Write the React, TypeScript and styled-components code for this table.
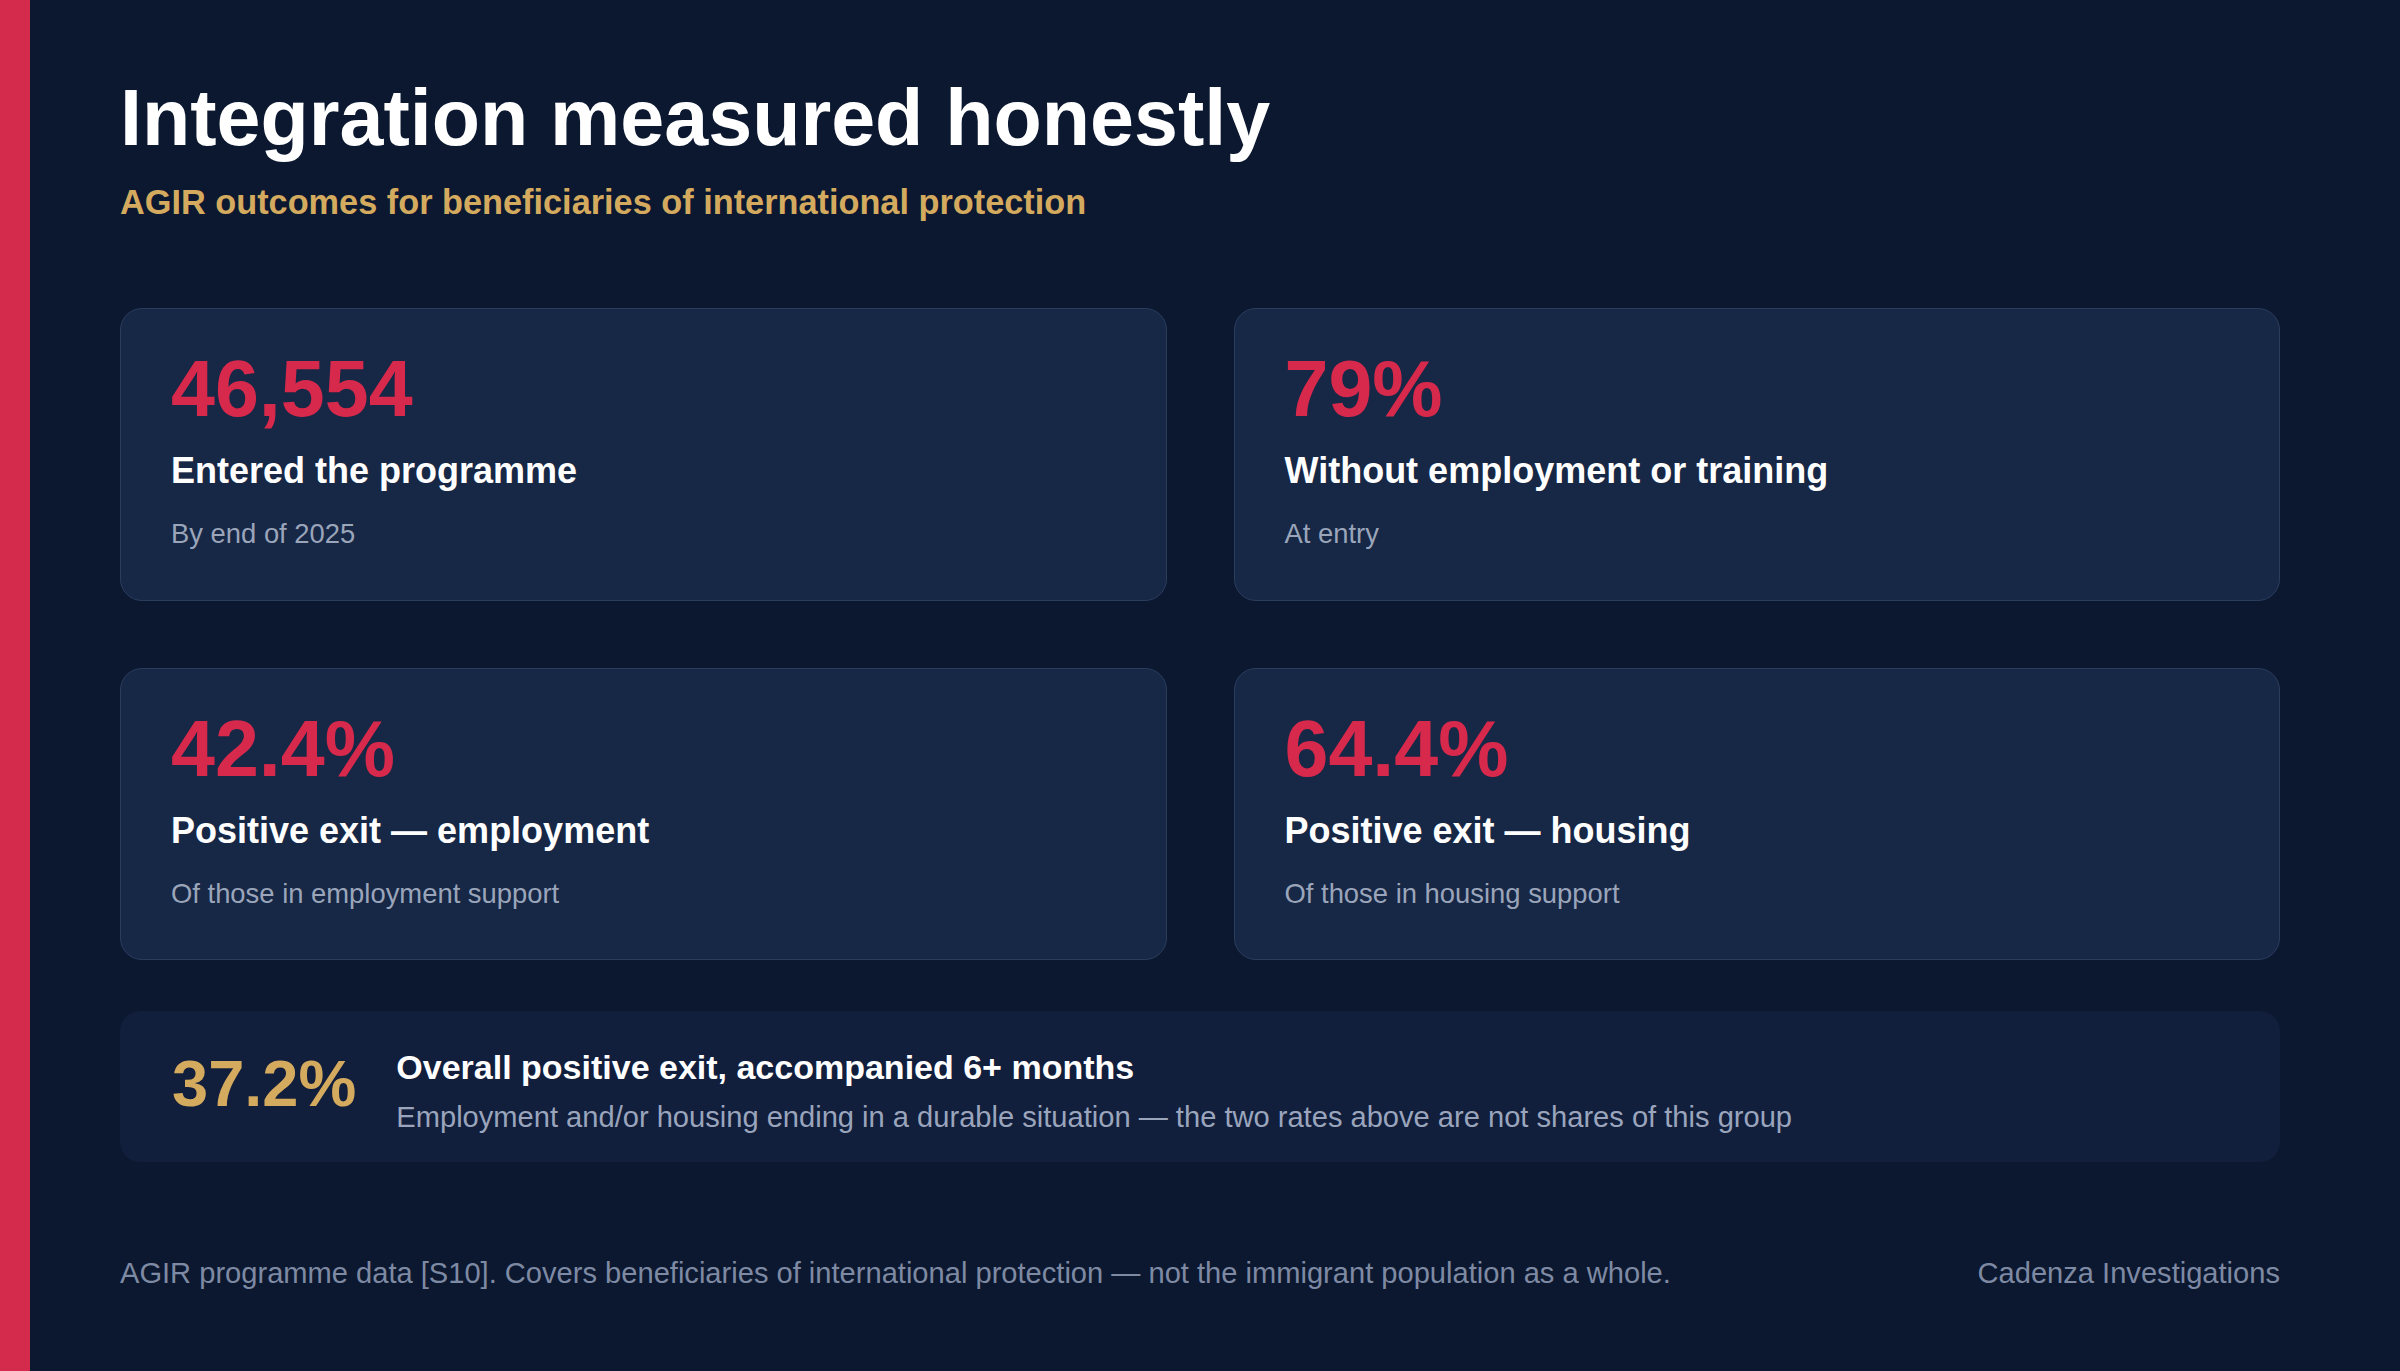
import React, { ReactElement } from "react"
import styled, { createGlobalStyle } from "styled-components"

const GlobalStyle = createGlobalStyle`
  html, body {
    margin: 0;
    padding: 0;
    background: #0c1830;
  }
  * {
    box-sizing: border-box;
  }
`

// Slide = accent bar + content column
const Slide = styled.div`
  display: flex;
  width: 2400px;
  height: 1371px;
  overflow: hidden;
  background: #0c1830;
  font-family: "Liberation Sans", Arial, sans-serif;
`

const AccentBar = styled.div`
  flex: 0 0 30px;
  background: #d42a4c;
`

const Content = styled.main`
  flex: 1;
  display: flex;
  flex-direction: column;
  padding: 78px 120px 0 90px;
`

const Title = styled.h1`
  margin: 0;
  font-size: 79px;
  line-height: 1;
  font-weight: 700;
  color: #ffffff;
`

const Subtitle = styled.p`
  margin: 28px 0 0;
  font-size: 34.3px;
  line-height: 1;
  font-weight: 700;
  color: #d4aa5f;
`

const StatGrid = styled.section`
  margin-top: 89px;
  display: grid;
  grid-template-columns: 1fr 1fr;
  gap: 67px;
`

const StatCard = styled.div`
  display: flex;
  flex-direction: column;
  padding: 40px 50px 52px;
  background: #172746;
  border: 1px solid #2b3d5e;
  border-radius: 22px;
`

const StatValue = styled.div`
  font-size: 79px;
  line-height: 1;
  font-weight: 700;
  color: #d7294b;
`

const StatLabel = styled.div`
  margin-top: 25px;
  font-size: 36px;
  line-height: 1;
  font-weight: 700;
  color: #ffffff;
`

const StatNote = styled.div`
  margin-top: 31px;
  font-size: 27.4px;
  line-height: 1;
  color: #9aa5ba;
`

// Summary = gold figure + two lines of text
const Summary = styled.div`
  margin-top: 51px;
  display: flex;
  align-items: flex-start;
  gap: 40px;
  padding: 36px 52px 27px;
  background: #111e3c;
  border-radius: 20px;
`

const SummaryValue = styled.div`
  margin-top: 4px;
  font-size: 65px;
  line-height: 1;
  font-weight: 700;
  color: #d4aa5f;
`

const SummaryText = styled.div`
  display: flex;
  flex-direction: column;
  gap: 12px;
`

const SummaryTitle = styled.div`
  font-size: 34px;
  line-height: 1.2;
  font-weight: 700;
  color: #ffffff;
`

const SummaryNote = styled.div`
  font-size: 29.1px;
  line-height: 1.2;
  color: #9aa5bc;
`

const Footer = styled.footer`
  margin-top: 97px;
  display: flex;
  justify-content: space-between;
  font-size: 29.1px;
  line-height: 1;
  color: #7e8aa3;
`

interface Stat {
  value: string
  label: string
  note: string
}

const STATS: Stat[] = [
  { value: "46,554", label: "Entered the programme", note: "By end of 2025" },
  { value: "79%", label: "Without employment or training", note: "At entry" },
  { value: "42.4%", label: "Positive exit — employment", note: "Of those in employment support" },
  { value: "64.4%", label: "Positive exit — housing", note: "Of those in housing support" },
]

const App = (): ReactElement => (
  <>
    <GlobalStyle />
    <Slide>
      <AccentBar />
      <Content>
        <Title>Integration measured honestly</Title>
        <Subtitle>AGIR outcomes for beneficiaries of international protection</Subtitle>
        <StatGrid>
          {STATS.map((stat) => (
            <StatCard key={stat.label}>
              <StatValue>{stat.value}</StatValue>
              <StatLabel>{stat.label}</StatLabel>
              <StatNote>{stat.note}</StatNote>
            </StatCard>
          ))}
        </StatGrid>
        <Summary>
          <SummaryValue>37.2%</SummaryValue>
          <SummaryText>
            <SummaryTitle>Overall positive exit, accompanied 6+ months</SummaryTitle>
            <SummaryNote>
              Employment and/or housing ending in a durable situation — the two rates above are not
              shares of this group
            </SummaryNote>
          </SummaryText>
        </Summary>
        <Footer>
          <span>
            AGIR programme data [S10]. Covers beneficiaries of international protection — not the
            immigrant population as a whole.
          </span>
          <span>Cadenza Investigations</span>
        </Footer>
      </Content>
    </Slide>
  </>
)

export default App
